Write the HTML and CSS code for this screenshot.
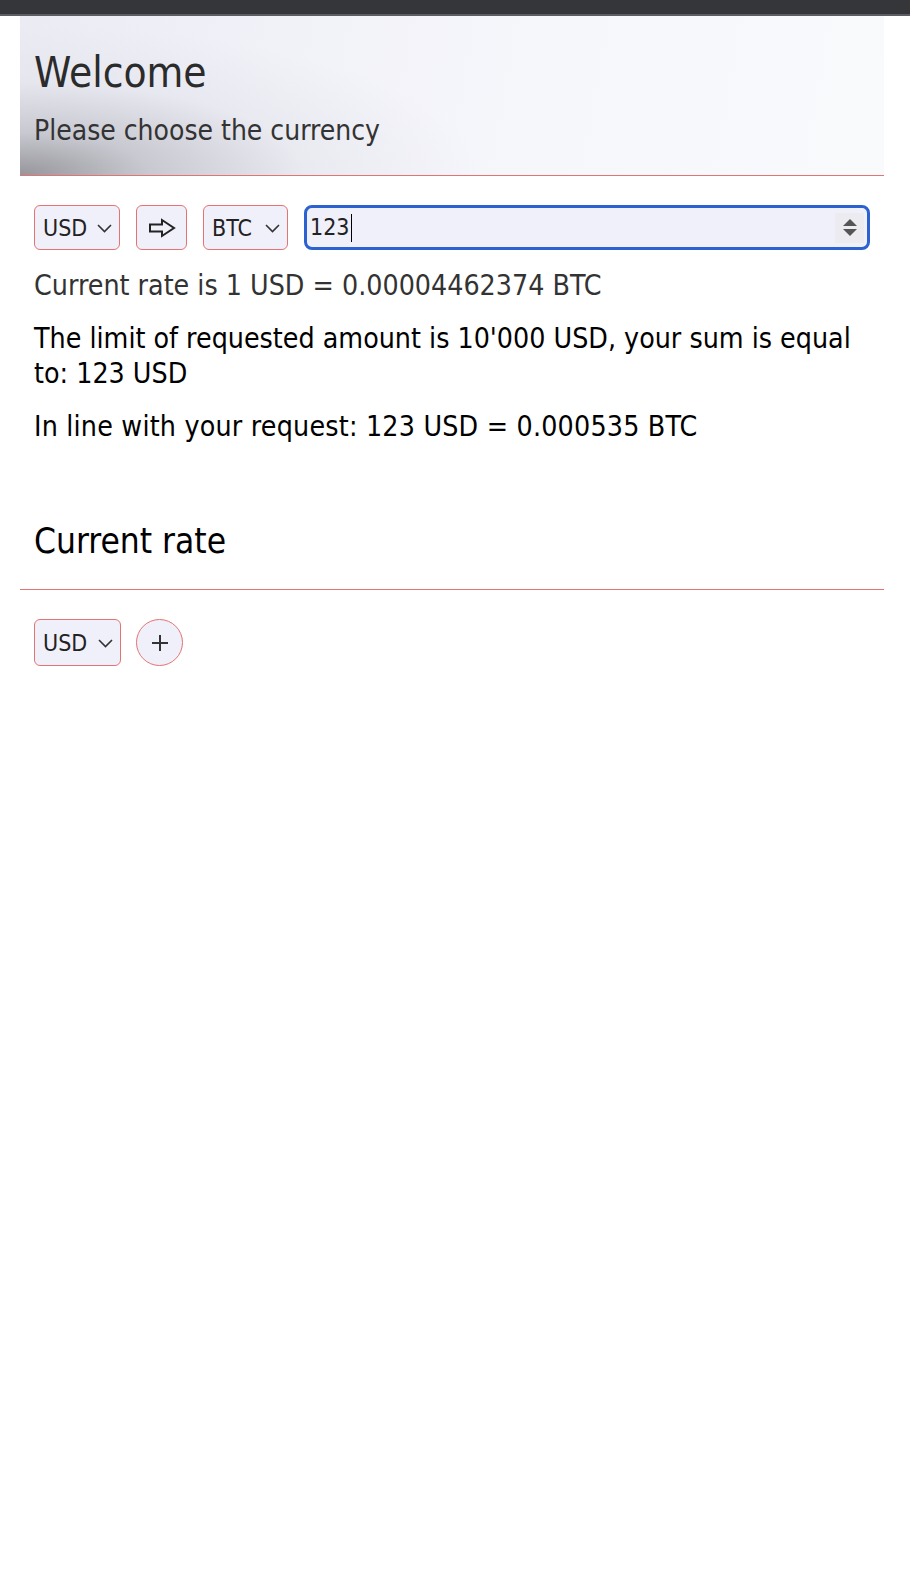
FILE: index.html
```html
<!DOCTYPE html>
<html lang="en">
<head>
<meta charset="utf-8">
<title>Currency</title>
<link rel="stylesheet" href="styles.css">
</head>
<body>
<div class="topbar"></div>
<main class="app">
  <header class="hero">
    <h1 class="hero-title">Welcome</h1>
    <p class="hero-sub">Please choose the currency</p>
  </header>

  <section class="converter">
    <div class="controls">
      <button class="select select-usd" type="button">
        <span>USD</span>
        <svg class="chev" width="15" height="9" viewBox="0 0 15 9"><path d="M1 1 L7.5 7.5 L14 1" fill="none" stroke="#333" stroke-width="1.6"/></svg>
      </button>
      <button class="arrow-btn" type="button" aria-label="convert">
        <svg width="28" height="20" viewBox="0 0 28 20"><path d="M2 6.5 H14 V2 L26 10 L14 18 V13.5 H2 Z" fill="none" stroke="#222" stroke-width="2" stroke-linejoin="miter"/></svg>
      </button>
      <button class="select select-btc" type="button">
        <span>BTC</span>
        <svg class="chev" width="15" height="9" viewBox="0 0 15 9"><path d="M1 1 L7.5 7.5 L14 1" fill="none" stroke="#333" stroke-width="1.6"/></svg>
      </button>
      <div class="amount">
        <span class="amount-value">123</span><span class="caret"></span>
        <span class="spinner">
          <svg width="16" height="24" viewBox="0 0 16 24"><path d="M8 3 L15 10 H1 Z" fill="#555"/><path d="M1 13 H15 L8 20 Z" fill="#555"/></svg>
        </span>
      </div>
    </div>
    <p class="rate">Current rate is 1 USD = 0.00004462374 BTC</p>
    <p class="info">The limit of requested amount is 10'000 USD, your sum is equal to: 123 USD</p>
    <p class="info info-wide">In line with your request: 123 USD = 0.000535 BTC</p>
  </section>

  <section class="rates">
    <h2 class="rates-title">Current rate</h2>
    <div class="rates-controls">
      <button class="select select-usd tall" type="button">
        <span>USD</span>
        <svg class="chev" width="15" height="9" viewBox="0 0 15 9"><path d="M1 1 L7.5 7.5 L14 1" fill="none" stroke="#333" stroke-width="1.6"/></svg>
      </button>
      <button class="plus-btn" type="button" aria-label="add">
        <svg width="20" height="20" viewBox="0 0 20 20"><path d="M10 2 V18 M2 10 H18" stroke="#333" stroke-width="2"/></svg>
      </button>
    </div>
  </section>
</main>
</body>
</html>
```

FILE: styles.css
```css
* { box-sizing: border-box; }

html, body {
  margin: 0;
  padding: 0;
  background: #ffffff;
}

body {
  font-family: "DejaVu Sans Condensed", "DejaVu Sans", sans-serif;
  color: #000;
}

.topbar {
  height: 16px;
  background: #35363a;
  border-bottom: 2px solid #5c5d64;
}

.app {
  margin-left: 20px;
  width: 864px;
}

.hero {
  height: 160px;
  padding: 32px 14px 0;
  border-bottom: 1px solid #e57373;
  background:
    radial-gradient(ellipse 460px 150px at 0% 100%, rgba(145,145,150,0.95) 0%, rgba(188,188,196,0.75) 28%, rgba(222,222,230,0.4) 62%, rgba(240,240,248,0) 100%),
    linear-gradient(100deg, #ebebf4 0%, #f2f2f9 35%, #f6f7fb 60%, #f8fafc 100%);
}

.hero-title {
  margin: 0;
  font-size: 42px;
  line-height: 50px;
  font-weight: normal;
  color: #2b2b2b;
}

.hero-sub {
  margin: 16px 0 0;
  font-size: 28px;
  line-height: 34px;
  color: #333;
}

.converter {
  padding: 29px 14px 0;
}

.controls {
  display: flex;
  gap: 16px;
  height: 45px;
}

.select {
  display: flex;
  align-items: center;
  justify-content: space-between;
  height: 45px;
  padding: 0 7px 0 8px;
  border: 1px solid #e57373;
  border-radius: 6px;
  background: #f0f0fa;
  font-family: "DejaVu Sans Condensed", "DejaVu Sans", sans-serif;
  font-size: 23px;
  color: #222;
}

.select-usd { width: 86px; }
.select-btc { width: 85px; }
.select.tall { height: 47px; width: 87px; }

.chev { flex: none; margin-top: 1px; }

.arrow-btn {
  display: flex;
  align-items: center;
  justify-content: center;
  width: 51px;
  height: 45px;
  padding: 0;
  border: 1px solid #e57373;
  border-radius: 6px;
  background: #f0f0fa;
}

.amount {
  flex: 1;
  display: flex;
  align-items: center;
  height: 45px;
  padding: 0 3px 0 3px;
  border: 3px solid #2c62cf;
  border-radius: 8px;
  background: #f0f0fa;
  font-size: 23px;
  color: #222;
}

.amount-value { line-height: 1; }

.caret {
  width: 1.5px;
  height: 28px;
  margin-left: 1px;
  background: #000;
}

.spinner {
  margin-left: auto;
  width: 29px;
  height: 30px;
  display: flex;
  align-items: center;
  justify-content: center;
  background: #ececf0;
}

.rate {
  margin: 18px 0 0;
  font-size: 28.3px;
  line-height: 35px;
  color: #333;
}

.info {
  margin: 18px 0 0;
  font-size: 28.3px;
  line-height: 35px;
  color: #000;
}

.info-wide {
  letter-spacing: 0.2px;
}

.rates {
  margin-top: 76px;
}

.rates-title {
  margin: 0;
  padding: 0 14px 27px;
  font-size: 35px;
  line-height: 42px;
  font-weight: normal;
  color: #000;
  border-bottom: 1px solid #e57373;
}

.rates-controls {
  display: flex;
  gap: 15px;
  padding: 29px 14px 0;
}

.plus-btn {
  display: flex;
  align-items: center;
  justify-content: center;
  width: 47px;
  height: 47px;
  padding: 0;
  border: 1px solid #e57373;
  border-radius: 50%;
  background: #f0f0fa;
}
```
